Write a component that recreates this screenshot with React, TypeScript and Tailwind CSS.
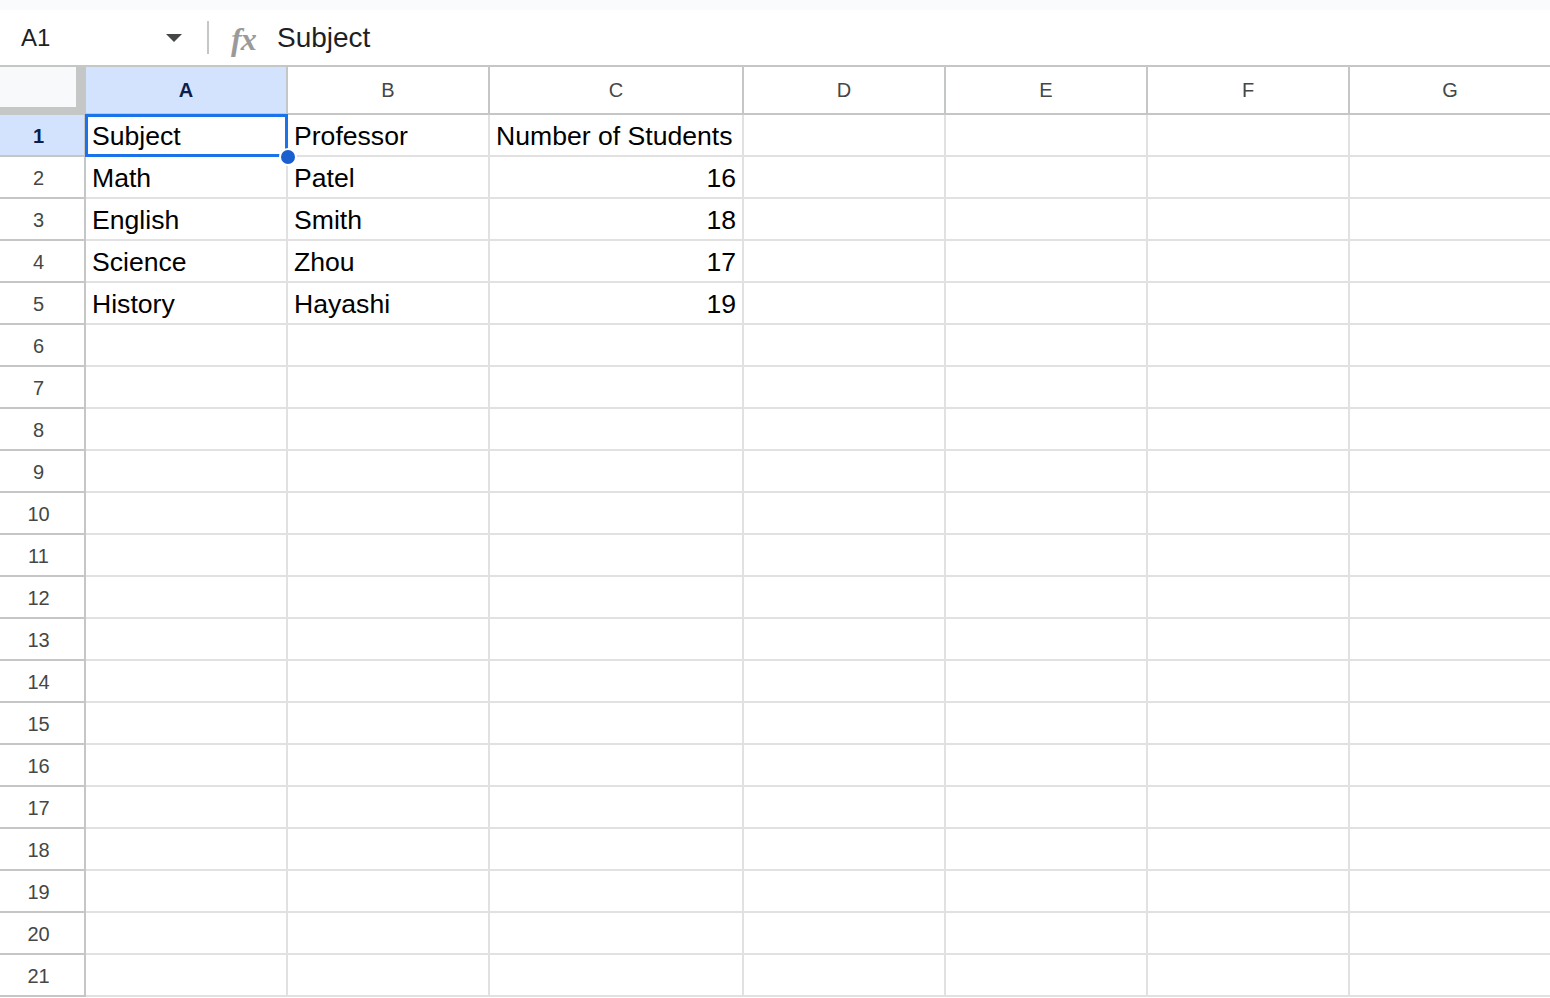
import React from 'react';

const COLS = ['A', 'B', 'C', 'D', 'E', 'F', 'G'];
const WIDTHS = ['w-[202px]', 'w-[202px]', 'w-[254px]', 'w-[202px]', 'w-[202px]', 'w-[202px]', 'w-[202px]'];

const DATA: (string | number)[][] = [
  ['Subject', 'Professor', 'Number of Students'],
  ['Math', 'Patel', 16],
  ['English', 'Smith', 18],
  ['Science', 'Zhou', 17],
  ['History', 'Hayashi', 19],
];

const font = 'font-[family-name:Liberation_Sans,Arial,sans-serif]';

function FormulaBar() {
  return (
    <div>
      <div className="h-[10px] bg-[#f9fbfd]" />
      <div className="h-[57px] flex items-center border-b-2 border-[#c4c7c5] bg-white">
        <div className="w-[207px] flex items-center pl-[21px] pr-[25px]">
          <span className="text-[24px] text-[#1f1f1f] flex-1">A1</span>
          <svg width="16" height="8" viewBox="0 0 16 8">
            <path d="M0 0 L16 0 L8 8 Z" fill="#444746" />
          </svg>
        </div>
        <div className="w-[2px] h-[33px] bg-[#c4c7c5]" />
        <span className="ml-[22px] w-[46px] pt-[2px] text-[32px] italic font-bold text-[#9a9a9a] font-[family-name:Liberation_Serif,serif] leading-none tracking-[-1px]">
          fx
        </span>
        <span className="text-[28px] text-[#1f1f1f]">Subject</span>
      </div>
    </div>
  );
}

function HeaderRow() {
  return (
    <div className="flex h-[48px]">
      <div className="w-[86px] shrink-0 border-r-[10px] border-b-[8px] border-[#c4c7c5] bg-[#f8f9fa]" />
      {COLS.map((c, i) => {
        const sel = i === 0;
        return (
          <div
            key={c}
            className={`${WIDTHS[i]} shrink-0 flex items-center justify-center border-r-2 border-b-2 border-[#c4c7c5] text-[20px] ${
              sel ? 'bg-[#d3e3fd] text-[#0b1e4d] font-bold' : 'bg-white text-[#444746]'
            }`}
          >
            {c}
          </div>
        );
      })}
    </div>
  );
}

function Row({ n }: { n: number }) {
  const vals = DATA[n - 1] || [];
  const sel = n === 1;
  return (
    <div className="flex h-[42px]">
      <div
        className={`w-[86px] shrink-0 flex items-center justify-center pr-[7px] pt-[1px] border-r-2 border-b-2 border-[#c4c7c5] text-[20px] ${
          sel ? 'bg-[#d3e3fd] text-[#0b1e4d] font-bold' : 'bg-white text-[#444746]'
        }`}
      >
        {n}
      </div>
      {COLS.map((c, i) => {
        const v = vals[i];
        const isNum = typeof v === 'number';
        return (
          <div
            key={c}
            className={`${WIDTHS[i]} shrink-0 flex items-center pt-[3px] border-r-2 border-b-2 border-[#e1e1e1] text-[26.6px] text-black whitespace-nowrap overflow-hidden ${
              isNum ? 'justify-end pr-[6px]' : 'pl-[6px]'
            }`}
          >
            {v !== undefined ? String(v) : ''}
          </div>
        );
      })}
    </div>
  );
}

export default function App() {
  return (
    <div className={`w-[1550px] h-[998px] overflow-hidden bg-white ${font}`}>
      <FormulaBar />
      <div className="relative">
        <HeaderRow />
        {Array.from({ length: 21 }, (_, i) => (
          <Row key={i} n={i + 1} />
        ))}
        {/* active cell A1 */}
        <div className="absolute left-[85px] top-[47px] w-[203px] h-[43px] border-[3px] border-[#1a73e8] pointer-events-none" />
        <div className="absolute left-[279px] top-[81px] w-[18px] h-[18px] rounded-full bg-[#1a5fd0] border-2 border-white" />
      </div>
    </div>
  );
}
